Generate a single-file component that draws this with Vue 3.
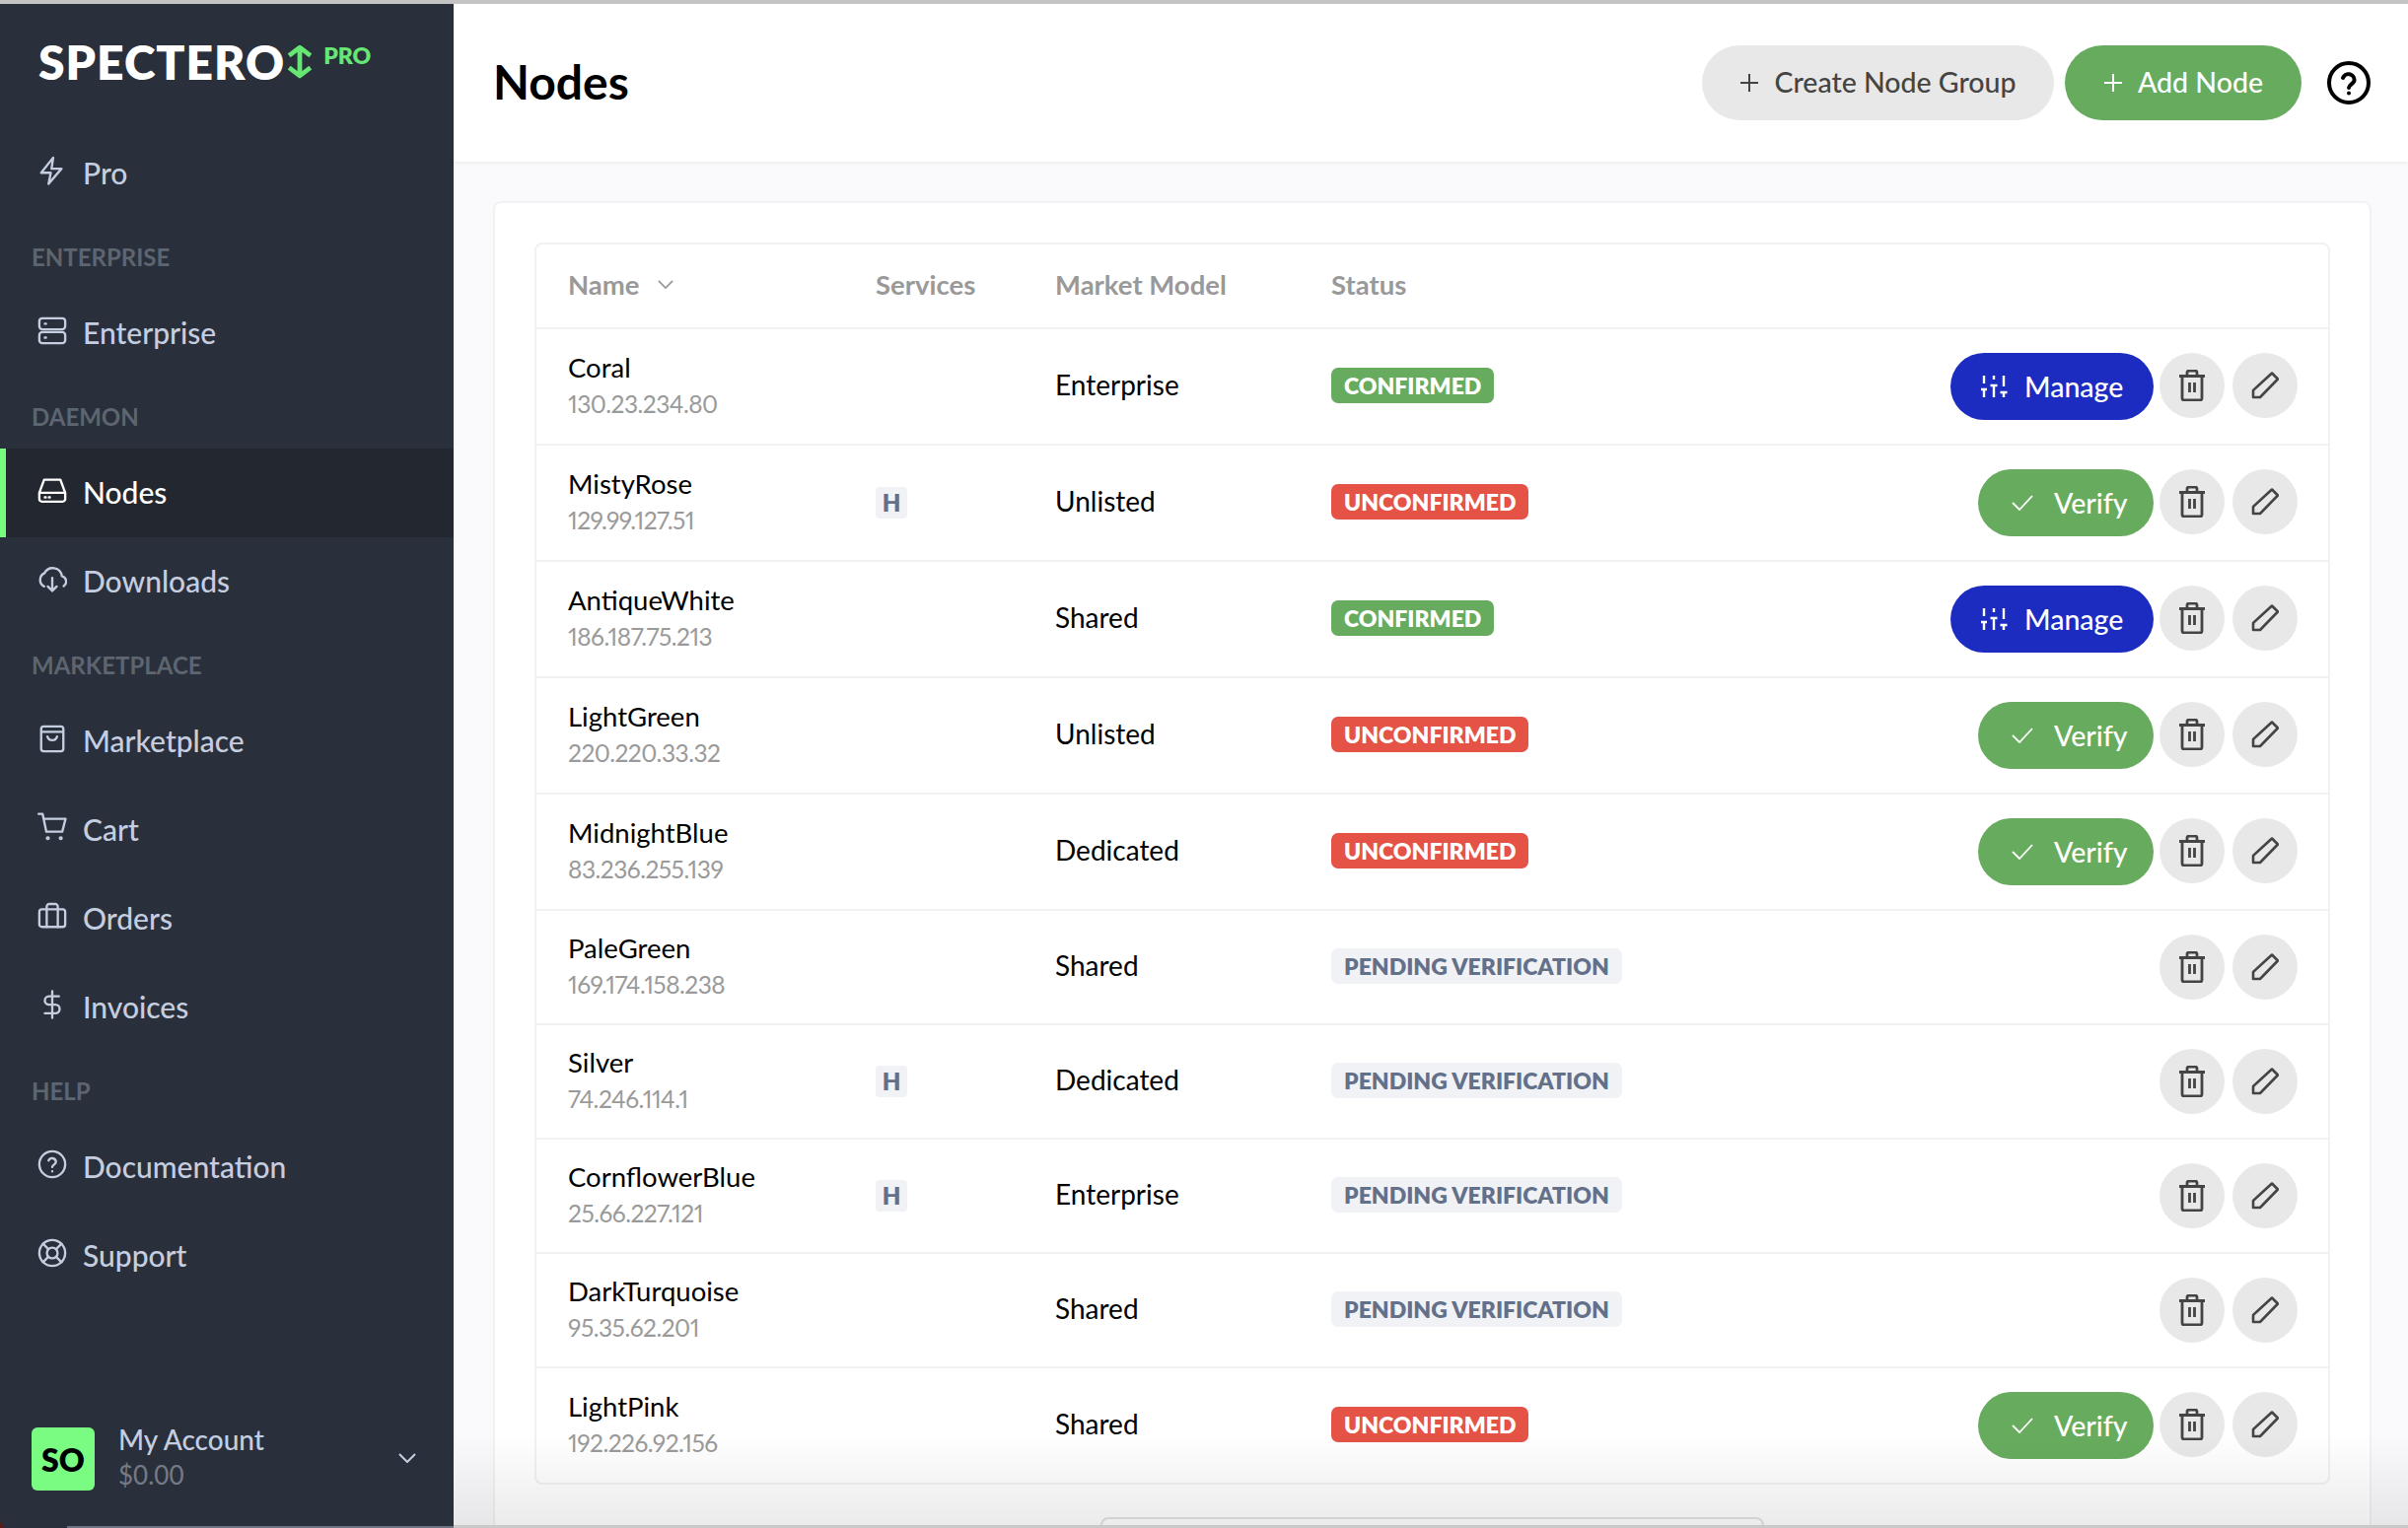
<script setup>
const icons = {
  zap: '<path d="M8.500 1 2 9.200h5.200L6 15.200 13 7H7.600z"/>',
  server: '<rect x="1" y="1.500" width="14" height="6" rx="1.600"/><rect x="1" y="9" width="14" height="6" rx="1.600"/><path d="M4 4.500h.6M4 12h.6"/>',
  drive: '<path d="M1 9.500h14M3.600 2.500h8.800L15 9.500v3.400a1.400 1.400 0 0 1-1.400 1.400H2.400A1.400 1.400 0 0 1 1 12.900V9.500z"/><path d="M4 12h.5M6.200 12h.5"/>',
  cloud: '<path d="M3.600 12.200A4 4 0 0 1 3.800 5 5 5 0 0 1 13.200 6.600a3 3 0 0 1 1 5.400"/><path d="M8 7.600v7M5.600 12.200 8 14.600l2.400-2.400"/>',
  bag: '<path d="M3.400 1.500h9.200a1.400 1.400 0 0 1 1.400 1.400v10.700a1.400 1.400 0 0 1-1.400 1.400H3.400A1.400 1.400 0 0 1 2 13.600V2.900a1.400 1.400 0 0 1 1.400-1.400zM2 4.500h12M5.400 7a2.700 2.700 0 0 0 5.200 0"/>',
  cart: '<path d="M.6.900h2.200l2 9.600h8.600l1.800-7H3.400"/><circle cx="5.600" cy="14" r=".5"/><circle cx="12.600" cy="14" r=".5"/>',
  orders: '<rect x="1" y="4.500" width="14" height="9.500" rx="1.400"/><path d="M5 14V3a1.400 1.400 0 0 1 1.400-1.400h3.200A1.400 1.400 0 0 1 11 3v11"/>',
  dollar: '<path d="M8 .8v14.400M11.600 3.500H6.300a2.300 2.300 0 0 0 0 4.600h3.400a2.300 2.300 0 0 1 0 4.600H4"/>',
  help: '<circle cx="8" cy="8" r="7"/><path d="M6 6a2.100 2.100 0 0 1 4 .7c0 1.400-2 1.800-2 2.800M8 11.800h.01"/>',
  buoy: '<circle cx="8" cy="8" r="7"/><circle cx="8" cy="8" r="2.900"/><path d="m3 3 2.900 2.900M10.100 10.100 13 13M13 3l-2.900 2.900M5.900 10.100 3 13"/>'
}

const navSections = [
  { key: 'pro', items: [{ label: 'Pro', icon: 'zap' }] },
  { key: 'ent', title: 'ENTERPRISE', items: [{ label: 'Enterprise', icon: 'server' }] },
  { key: 'dae', title: 'DAEMON', items: [{ label: 'Nodes', icon: 'drive', active: true }, { label: 'Downloads', icon: 'cloud' }] },
  { key: 'mkt', title: 'MARKETPLACE', items: [
    { label: 'Marketplace', icon: 'bag' },
    { label: 'Cart', icon: 'cart' },
    { label: 'Orders', icon: 'orders' },
    { label: 'Invoices', icon: 'dollar' }
  ] },
  { key: 'hlp', title: 'HELP', items: [{ label: 'Documentation', icon: 'help' }, { label: 'Support', icon: 'buoy' }] }
]

const nodes = [
  { name: 'Coral', ip: '130.23.234.80', market: 'Enterprise', status: 'CONFIRMED', action: 'manage' },
  { name: 'MistyRose', ip: '129.99.127.51', market: 'Unlisted', status: 'UNCONFIRMED', action: 'verify', service: 'H' },
  { name: 'AntiqueWhite', ip: '186.187.75.213', market: 'Shared', status: 'CONFIRMED', action: 'manage' },
  { name: 'LightGreen', ip: '220.220.33.32', market: 'Unlisted', status: 'UNCONFIRMED', action: 'verify' },
  { name: 'MidnightBlue', ip: '83.236.255.139', market: 'Dedicated', status: 'UNCONFIRMED', action: 'verify' },
  { name: 'PaleGreen', ip: '169.174.158.238', market: 'Shared', status: 'PENDING VERIFICATION' },
  { name: 'Silver', ip: '74.246.114.1', market: 'Dedicated', status: 'PENDING VERIFICATION', service: 'H' },
  { name: 'CornflowerBlue', ip: '25.66.227.121', market: 'Enterprise', status: 'PENDING VERIFICATION', service: 'H' },
  { name: 'DarkTurquoise', ip: '95.35.62.201', market: 'Shared', status: 'PENDING VERIFICATION' },
  { name: 'LightPink', ip: '192.226.92.156', market: 'Shared', status: 'UNCONFIRMED', action: 'verify' }
]

const statusClass = (status) => {
  if (status === 'CONFIRMED') return 'badge-green'
  if (status === 'UNCONFIRMED') return 'badge-red'
  return 'badge-grey'
}
</script>

<template>
  <div class="window">
    <aside class="sidebar">
      <div class="logo">
        <span class="logo-word">SPECTERO</span>
        <svg class="logo-arrow" viewBox="0 0 26 34" fill="none" stroke="#66e673" stroke-width="4.600" stroke-linejoin="round">
          <path d="M13 3v28M2.500 11 13 3l10.500 8M2.500 23 13 31l10.500-8"/>
        </svg>
        <span class="logo-pro">PRO</span>
      </div>

      <template v-for="section in navSections" :key="section.key">
        <div v-if="section.title" class="nav-title">{{ section.title }}</div>
        <a
          v-for="item in section.items"
          :key="item.label"
          class="nav-item"
          :class="{ active: item.active }"
        >
          <svg class="nav-icon" viewBox="0 0 16 16" fill="none" stroke="currentColor" stroke-width="1.250" stroke-linecap="round" stroke-linejoin="round" v-html="icons[item.icon]"></svg>
          <span>{{ item.label }}</span>
        </a>
      </template>

      <div class="account">
        <div class="avatar">SO</div>
        <div class="account-text">
          <div class="account-name">My Account</div>
          <div class="account-balance">$0.00</div>
        </div>
        <svg class="account-chevron" viewBox="0 0 18 10" fill="none" stroke="#c5cee0" stroke-width="2">
          <path d="m1 1 8 8 8-8"/>
        </svg>
      </div>
    </aside>

    <main class="main">
      <header class="topbar">
        <h1>Nodes</h1>
        <div class="topbar-actions">
          <button class="pill pill-grey">
            <svg class="plus" viewBox="0 0 20 20" fill="none" stroke="currentColor" stroke-width="2"><path d="M10 1v18M1 10h18"/></svg>
            <span>Create Node Group</span>
          </button>
          <button class="pill pill-green">
            <svg class="plus" viewBox="0 0 20 20" fill="none" stroke="currentColor" stroke-width="2"><path d="M10 1v18M1 10h18"/></svg>
            <span>Add Node</span>
          </button>
          <svg class="help" viewBox="0 0 44 44" fill="none" stroke="#000" stroke-width="4" stroke-linecap="round">
            <circle cx="22" cy="22" r="20"/>
            <path d="M16 17a6 6 0 0 1 11.600 2c0 4-5.600 4.500-5.600 8M22 32.500h.01"/>
          </svg>
        </div>
      </header>

      <section class="content">
        <div class="card">
          <div class="table">
            <div class="row head">
              <div class="name-head">
                Name
                <svg class="sort" viewBox="0 0 18 10" fill="none" stroke="#999" stroke-width="2"><path d="m1 1 8 8 8-8"/></svg>
              </div>
              <div>Services</div>
              <div>Market Model</div>
              <div>Status</div>
            </div>
            <div v-for="node in nodes" :key="node.name" class="row">
              <div class="node-cell">
                <div class="node-name">{{ node.name }}</div>
                <div class="node-ip">{{ node.ip }}</div>
              </div>
              <div class="service-cell"><span v-if="node.service" class="service">{{ node.service }}</span></div>
              <div class="market">{{ node.market }}</div>
              <div class="status-cell"><span class="badge" :class="statusClass(node.status)">{{ node.status }}</span></div>
              <div class="actions">
                <button v-if="node.action === 'manage'" class="act act-manage">
                  <svg class="manage-icon" viewBox="0 0 28 24" fill="none" stroke="#fff" stroke-width="2.400">
                    <path d="M4 1v8M4 15v8M1 15h6M14 1v4M14 11v12M10.500 11h7M24 1v11M24 18v5M20.500 18h7"/>
                  </svg>
                  Manage
                </button>
                <button v-else-if="node.action === 'verify'" class="act act-verify">
                  <svg class="verify-icon" viewBox="0 0 22 16" fill="none" stroke="#fff" stroke-width="1.800"><path d="m1 8 7 7L21 1"/></svg>
                  Verify
                </button>
                <button class="round">
                  <svg viewBox="0 0 28 32" fill="none" stroke="#444" stroke-width="2.800" stroke-linejoin="round">
                    <path d="M1 6.500h26M4 6.500v22.500a2 2 0 0 0 2 2h16a2 2 0 0 0 2-2V6.500M9 6.500V3a2 2 0 0 1 2-2h6a2 2 0 0 1 2 2v3.500M11.500 13v10M16.500 13v10"/>
                  </svg>
                </button>
                <button class="round">
                  <svg viewBox="0 0 28 28" fill="none" stroke="#444" stroke-width="2.600" stroke-linejoin="round">
                    <path d="M21 1.500 27 7.500 9 26H2v-7z"/>
                  </svg>
                </button>
              </div>
            </div>
          </div>
          <div class="pagination"></div>
        </div>
      </section>
    </main>
    <div class="bottom-fade"></div>
  </div>
</template>

<style>
html, body { margin: 0; background: #fff; }
</style>

<style scoped>
.window {
  position: relative;
  display: flex;
  height: 1550px;
  overflow: hidden;
  box-sizing: border-box;
  border-top: 4px solid #c4c4c4;
  background: linear-gradient(to right, #5a1a14 4px, #2a303b 4px, #2a303b 68px, #6e7383 68px);
  font-family: Lato, "Noto Sans", sans-serif;
  color: #000;
}

.sidebar {
  flex: 0 0 460px;
  height: 1544px;
  background: #2a303b;
  color: #c5cee0;
  border-radius: 0 0 0 6px;
  display: flex;
  flex-direction: column;
}

.logo {
  height: 127px;
  flex: none;
  display: flex;
  align-items: flex-start;
  padding: 27px 0 0 39px;
  box-sizing: border-box;
}

.logo-word {
  font-size: 48px;
  line-height: 64px;
  font-weight: 800;
  color: #fff;
  letter-spacing: 1px;
}

.logo-arrow {
  width: 28px;
  height: 35px;
  margin: 14px 0 0 1px;
}

.logo-pro {
  font-size: 23px;
  line-height: 30px;
  font-weight: 800;
  color: #66e673;
  margin: 10px 0 0 10px;
}

.nav-title {
  height: 72px;
  flex: none;
  padding-left: 32px;
  font-size: 24px;
  font-weight: 700;
  line-height: 80px;
  color: #5d6570;
}

.nav-item {
  height: 90px;
  flex: none;
  display: flex;
  align-items: center;
  padding-left: 38px;
  font-size: 30px;
  font-weight: 500;
  box-sizing: border-box;
}

.nav-item span {
  margin-top: -2px;
}

.nav-item.active {
  background: #232730;
  color: #fff;
  border-left: 6px solid #76fb7f;
  padding-left: 32px;
}

.nav-icon {
  width: 30px;
  height: 30px;
  margin-right: 16px;
  margin-top: -6px;
}

.account {
  margin-top: auto;
  height: 96px;
  margin-bottom: 20px;
  padding: 0 38px 0 32px;
  display: flex;
  align-items: center;
}

.avatar {
  width: 64px;
  height: 64px;
  border-radius: 6px;
  background: #7afc83;
  color: #000;
  font-size: 32px;
  font-weight: 800;
  display: flex;
  align-items: center;
  justify-content: center;
  margin-right: 24px;
}

.account-text {
  flex: 1;
  margin-top: -4px;
}

.account-name {
  font-size: 28px;
  line-height: 36px;
  font-weight: 500;
}

.account-balance {
  font-size: 26px;
  line-height: 36px;
  color: #747b87;
}

.account-chevron {
  width: 18px;
  height: 10px;
  margin-top: -2px;
}

.main {
  flex: 1;
  min-width: 0;
  background: #fafafc;
}

.topbar {
  height: 160px;
  box-sizing: border-box;
  background: #fff;
  box-shadow: 0 1px 4px rgba(0, 0, 0, 0.07);
  display: flex;
  align-items: center;
  justify-content: space-between;
  padding: 0 38px 0 40px;
}

h1 {
  margin: -4px 0 0;
  font-size: 48px;
  font-weight: 700;
}

.topbar-actions {
  display: flex;
  align-items: center;
}

.pill {
  height: 76px;
  border: 0;
  border-radius: 38px;
  font: inherit;
  font-size: 28.500px;
  font-weight: 500;
  display: flex;
  align-items: center;
  justify-content: center;
  padding: 0;
}

.pill span {
  margin-top: -2px;
}

.pill-grey {
  width: 357px;
  background: #e8e8e8;
  color: #444;
}

.pill-green {
  width: 240px;
  margin-left: 11px;
  background: #67ac5e;
  color: #fff;
}

.plus {
  width: 20px;
  height: 20px;
  margin-right: 15px;
}

.help {
  width: 44px;
  height: 44px;
  margin-left: 26px;
}

.content {
  padding: 40px 37px 0 40px;
}

.card {
  box-sizing: border-box;
  background: #fff;
  border: 2px solid #f1f1f3;
  border-radius: 8px;
  padding: 40px 40px 0;
}

.table {
  border: 2px solid #f1f1f3;
  border-radius: 8px;
}

.row {
  display: grid;
  grid-template-columns: 312px 182px 280px auto 1fr;
  align-items: center;
  padding: 24px 31px 24px 32px;
  border-top: 2px solid #f1f1f3;
  font-size: 27.500px;
}

.row.head {
  border-top: 0;
  height: 84px;
  padding-top: 0;
  padding-bottom: 4px;
  box-sizing: border-box;
  color: #999;
  font-size: 27.500px;
  font-weight: 700;
}

.name-head {
  display: flex;
  align-items: center;
}

.sort {
  width: 16px;
  height: 9px;
  margin-left: 18px;
}

.node-cell {
  height: 66px;
  margin-top: -3px;
}

.node-name {
  line-height: 29px;
}

.node-ip {
  font-size: 24.500px;
  line-height: 29px;
  margin-top: 8px;
  color: #9a9a9a;
  font-variant-numeric: proportional-nums;
  letter-spacing: -0.5px;
}

.service-cell {
  margin-top: -2px;
}

.market {
  font-size: 28px;
  margin-top: -4px;
}

.status-cell {
  margin-top: -2px;
}

.service {
  display: inline-block;
  width: 32px;
  height: 32px;
  line-height: 32px;
  text-align: center;
  border-radius: 4px;
  background: #f1f2f5;
  color: #63708a;
  font-size: 24px;
  font-weight: 800;
}

.badge {
  display: inline-block;
  height: 36px;
  line-height: 36px;
  padding: 0 13px;
  border-radius: 7px;
  font-size: 23px;
  font-weight: 800;
  white-space: nowrap;
}

.badge-green { background: #67ac5e; color: #fff; }
.badge-red { background: #e45345; color: #fff; }
.badge-grey { background: #f1f2f5; color: #63708a; }

.actions {
  display: flex;
  justify-content: flex-end;
  align-items: flex-start;
  gap: 6px;
}

.act {
  height: 68px;
  border: 0;
  border-radius: 34px;
  color: #fff;
  font: inherit;
  font-size: 28.500px;
  font-weight: 500;
  display: flex;
  align-items: center;
  padding: 0;
  box-sizing: border-box;
}

.act-manage {
  width: 206px;
  background: #1d2cc0;
  padding-left: 30px;
}

.act-verify {
  width: 178px;
  background: #67ac5e;
  padding-left: 34px;
}

.manage-icon {
  width: 28px;
  height: 24px;
  margin-right: 17px;
}

.verify-icon {
  width: 22px;
  height: 16px;
  margin-right: 21px;
}

.round {
  width: 66px;
  height: 66px;
  border: 0;
  border-radius: 50%;
  background: #e8e8e8;
  display: flex;
  align-items: center;
  justify-content: center;
  padding: 0;
}

.round + .round {
  margin-left: 2px;
}

.round svg {
  width: 28px;
  height: 32px;
}

.pagination {
  width: 673px;
  height: 60px;
  margin: 33px auto 0;
  box-sizing: border-box;
  border: 2px solid #e2e2e2;
  border-radius: 8px;
}

.bottom-fade {
  position: absolute;
  left: 460px;
  right: 0;
  bottom: 0;
  height: 96px;
  pointer-events: none;
  background: linear-gradient(to bottom, rgba(0, 0, 0, 0), rgba(0, 0, 0, 0.08));
  border-bottom: 3px solid #c9c9c9;
  box-sizing: border-box;
}
</style>
